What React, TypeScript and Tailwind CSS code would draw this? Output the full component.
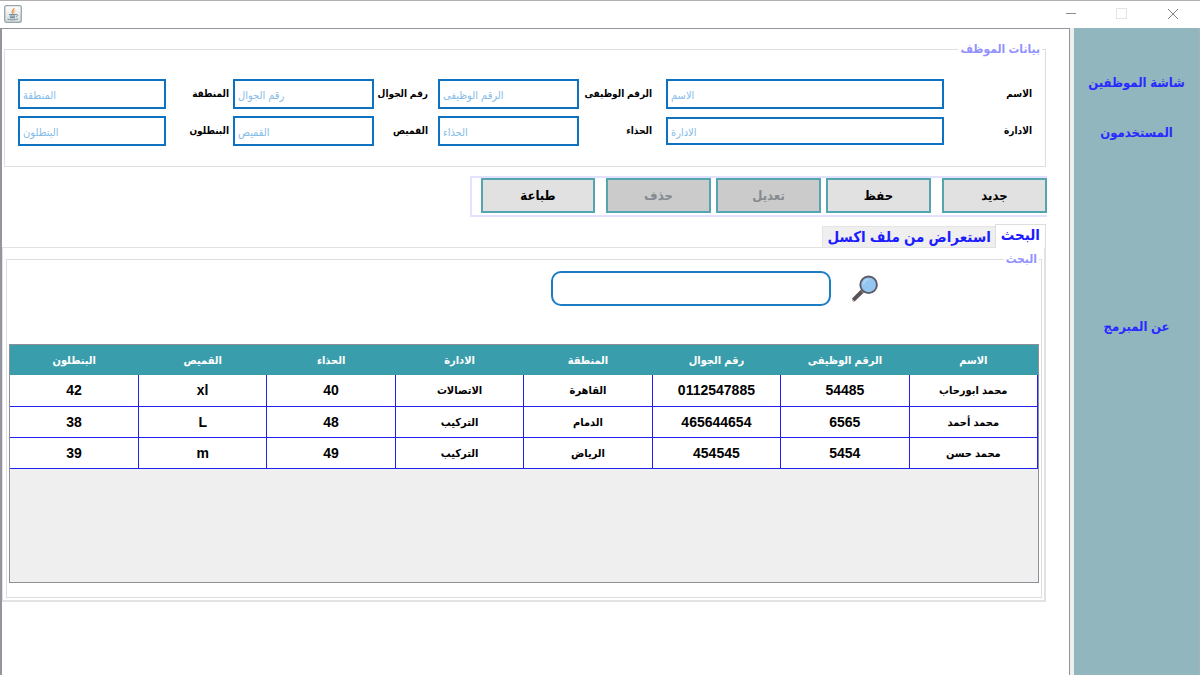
import React from 'react';

type Field = { id: string; label: string; labelClass: string; inputClass: string };

const fields: Field[] = [
  { id: 'name', label: 'الاسم', labelClass: '', inputClass: 'h-[30px]' },
  { id: 'job-number', label: 'الرقم الوظيفى', labelClass: 'pr-3.5', inputClass: 'h-[30px]' },
  { id: 'mobile', label: 'رقم الجوال', labelClass: 'pr-2.5', inputClass: 'h-[30px]' },
  { id: 'region', label: 'المنطقة', labelClass: 'pr-1', inputClass: 'h-[30px]' },
  { id: 'department', label: 'الادارة', labelClass: '', inputClass: 'h-7' },
  { id: 'shoes', label: 'الحذاء', labelClass: 'pr-3.5', inputClass: 'h-[30px]' },
  { id: 'shirt', label: 'القميص', labelClass: 'pr-2.5', inputClass: 'h-[30px]' },
  { id: 'trousers', label: 'البنطلون', labelClass: 'pr-1', inputClass: 'h-[30px]' },
];

const columns = [
  'الاسم',
  'الرقم الوظيفى',
  'رقم الجوال',
  'المنطقة',
  'الادارة',
  'الحذاء',
  'القميص',
  'البنطلون',
];

const rows = [
  ['محمد ابورحاب', '54485', '0112547885', 'القاهرة', 'الاتصالات', '40', 'xl', '42'],
  ['محمد أحمد', '6565', '465644654', 'الدمام', 'التركيب', '48', 'L', '38'],
  ['محمد حسن', '5454', '454545', 'الرياض', 'التركيب', '49', 'm', '39'],
];

function JavaIcon() {
  return (
    <svg className="h-[18px] w-[18px]" viewBox="0 0 18 18" fill="none" aria-hidden="true">
      <defs>
        <linearGradient id="java-tile" x1="0" y1="0" x2="0" y2="1">
          <stop offset="0" stopColor="#ffffff" />
          <stop offset="1" stopColor="#d3dade" />
        </linearGradient>
      </defs>
      <rect x="0.7" y="0.7" width="16.6" height="16.6" rx="2" fill="url(#java-tile)" stroke="#97a4aa" strokeWidth="1.3" />
      <path d="M9.8 3.200c.8 1.500-2.600 2.400-1.500 4.200.3.600.7.900.9 1.300" stroke="#e8a04c" strokeWidth="1.500" />
      <path d="M11.200 5.400c-1.500.6-2 1.400-1.100 2.700" stroke="#e8a04c" strokeWidth="1" />
      <path d="M5 9.500h7M5.600 11.200h5.600M6 12.700h5" stroke="#7890a0" strokeWidth="1.200" />
      <path d="M12 9.600c2.300-.4 1.900 1.700 0 2.200M3.500 14c2.700 1.300 8 1.100 10.400-.2" stroke="#7890a0" strokeWidth="1" />
    </svg>
  );
}

function SearchIcon() {
  return (
    <svg className="h-7 w-7" viewBox="0 0 28 28" aria-hidden="true">
      <path d="M11.500 16 2.200 25.200" stroke="#5b5158" strokeWidth="4" strokeLinecap="butt" />
      <path d="M10.800 16.200 12 17.200M1.400 25.400l1.400 1.200" stroke="#c9a070" strokeWidth="1.200" />
      <circle cx="17.600" cy="9.800" r="8.300" fill="#93c6f0" stroke="#5b5a66" strokeWidth="1.900" />
      <path d="M12.500 9.500a5.300 5.300 0 0 1 5-5" stroke="#b4daf8" strokeWidth="1.300" fill="none" />
    </svg>
  );
}

function TitleBar() {
  return (
    <header dir="ltr" className="flex h-7 items-center border-t border-[#b0b0b0] bg-white pr-px pb-0.5 pl-1">
      <JavaIcon />
      <div className="ml-auto flex">
        <button type="button" aria-label="تصغير" className="flex h-6 w-[51px] items-center justify-center">
          <svg className="h-3 w-3" viewBox="0 0 12 12" stroke="#8c8c8c" aria-hidden="true">
            <path d="M1 5.500h10" />
          </svg>
        </button>
        <button type="button" aria-label="تكبير" disabled className="flex h-6 w-[51px] items-center justify-center">
          <svg className="h-3 w-3" viewBox="0 0 12 12" fill="none" stroke="#e4e4e4" aria-hidden="true">
            <rect x="0.500" y="0.500" width="10" height="10" />
          </svg>
        </button>
        <button type="button" aria-label="إغلاق" className="flex h-6 w-[52px] items-center justify-center">
          <svg className="h-3 w-3" viewBox="0 0 12 12" stroke="#858585" aria-hidden="true">
            <path d="M1 1l10 10M11 1 1 11" />
          </svg>
        </button>
      </div>
    </header>
  );
}

function EmployeeForm() {
  return (
    <fieldset className="mr-[23px] ml-0.5 border border-[#dedede] pr-[13px] pb-5 pl-[13px]">
      <legend className="-mr-2.5 h-4 px-0.5 text-[12px] leading-4 font-bold text-[#9292ff]">بيانات الموظف</legend>
      <div className="mt-[22px] grid grid-cols-[88px_278fr_87px_141fr_64px_141fr_67px_148fr] items-center gap-y-[7px]">
        {fields.map((f) => (
          <React.Fragment key={f.id}>
            <label
              htmlFor={f.id}
              className={`text-[10px] leading-4 font-bold whitespace-nowrap text-black ${f.labelClass}`}
            >
              {f.label}
            </label>
            <input
              id={f.id}
              type="text"
              placeholder={f.label}
              className={`w-full min-w-0 border-2 border-[#0f72c0] bg-white px-[3px] pt-0.5 text-left text-[11px] text-black outline-none placeholder:text-[#86bce8] placeholder:opacity-100 ${f.inputClass}`}
            />
          </React.Fragment>
        ))}
      </div>
    </fieldset>
  );
}

const enabledButton = 'h-[35px] border-2 border-[#55a5b1] bg-[#e1e1e1] text-[13px] font-bold text-black';
const disabledButton = 'h-[35px] border-2 border-[#55a5b1] bg-[#cbcbcb] text-[13px] font-bold text-[#858b90]';

function Toolbar() {
  return (
    <div className="mt-[9px] mr-[22px] flex w-fit items-start border-2 border-r-0 border-[#e2e2ff] pb-0.5 pl-[9px]">
      <button type="button" className={`w-[105px] ${enabledButton}`}>جديد</button>
      <button type="button" className={`mr-[11px] w-[105px] ${enabledButton}`}>حفظ</button>
      <button type="button" disabled className={`mr-[5px] w-[105px] ${disabledButton}`}>تعديل</button>
      <button type="button" disabled className={`mr-[5px] w-[105px] ${disabledButton}`}>حذف</button>
      <button type="button" className={`mr-[11px] w-[114px] ${enabledButton}`}>طباعة</button>
    </div>
  );
}

function ResultsTable() {
  return (
    <div className="mx-0.5 mt-[38px] min-h-[239px] border border-[#8d9095] bg-[#efefef]">
      <table className="w-full table-fixed border-collapse text-center font-bold">
        <thead>
          <tr className="h-[30px] bg-[#3a9dab] text-[11px] text-white">
            {columns.map((c) => (
              <th key={c} scope="col" className="p-0 leading-4">{c}</th>
            ))}
          </tr>
        </thead>
        <tbody>
          {rows.map((r) => (
            <tr key={r[0]} className="h-[31px] border-b border-[#2020f0] bg-white text-black">
              {r.map((cell, i) => (
                <td
                  key={columns[i]}
                  className={
                    /[0-9a-zA-Z]/.test(cell)
                      ? 'border-r border-[#2020f0] p-0 text-[14px] leading-4'
                      : 'border-r border-[#2020f0] p-0 text-[11px] leading-4'
                  }
                >
                  {cell}
                </td>
              ))}
            </tr>
          ))}
        </tbody>
      </table>
    </div>
  );
}

function SearchPanel() {
  return (
    <section className="mr-[23px]">
      <div role="tablist" className="flex items-end">
        <button
          type="button"
          role="tab"
          aria-selected="true"
          className="relative -mb-px h-6 border border-b-0 border-[#dedede] bg-white px-[5px] pb-1 text-[15px] leading-5 font-bold text-[#1c1cff]"
        >
          البحث
        </button>
        <button
          type="button"
          role="tab"
          aria-selected="false"
          className="h-[21px] border-t border-l border-[#e4e4e4] bg-[#efefef] px-1 text-[15px] leading-5 font-bold text-[#1c1cff]"
        >
          استعراض من ملف اكسل
        </button>
      </div>
      <div role="tabpanel" className="border border-r-2 border-b-2 border-[#e2e2e2] pt-[3px] pr-0.5 pb-0.5 pl-[3px]">
        <fieldset className="min-w-0 border border-[#dedede] pb-3.5">
          <legend className="mr-0.5 h-4 px-0.5 text-[12px] leading-4 font-bold text-[#9292ff]">البحث</legend>
          <div className="mt-1 flex items-center gap-5 pr-[162px]">
            <button type="button" aria-label="بحث">
              <SearchIcon />
            </button>
            <input
              type="text"
              aria-label="البحث"
              className="h-[35px] w-[280px] rounded-[10px] border-2 border-[#1c7dc3] bg-white px-2 text-[14px] outline-none"
            />
          </div>
          <ResultsTable />
        </fieldset>
      </div>
    </section>
  );
}

function Sidebar() {
  return (
    <nav className="flex w-[126px] shrink-0 flex-col items-center border-r border-[#a9b4b8] bg-[#92b6be] pt-[45px] text-[13px] leading-5 font-bold whitespace-nowrap text-[#2a2aff]">
      <a href="#employees">شاشة الموظفين</a>
      <a href="#users" className="mt-[30px]">المستخدمون</a>
      <a href="#about" className="mt-[174px]">عن المبرمج</a>
    </nav>
  );
}

export default function App() {
  return (
    <div
      dir="rtl"
      className="flex min-h-screen flex-col bg-white font-['Liberation_Sans','DejaVu_Sans_Condensed','DejaVu_Sans',sans-serif]"
    >
      <TitleBar />
      <div className="flex flex-1">
        <Sidebar />
        <div className="w-1 shrink-0 bg-[#efefef]" />
        <main className="min-w-0 flex-1 border-t border-r border-l-2 border-[#92959b] bg-white pt-3">
          <EmployeeForm />
          <Toolbar />
          <div className="h-[7px]" />
          <SearchPanel />
        </main>
      </div>
    </div>
  );
}
